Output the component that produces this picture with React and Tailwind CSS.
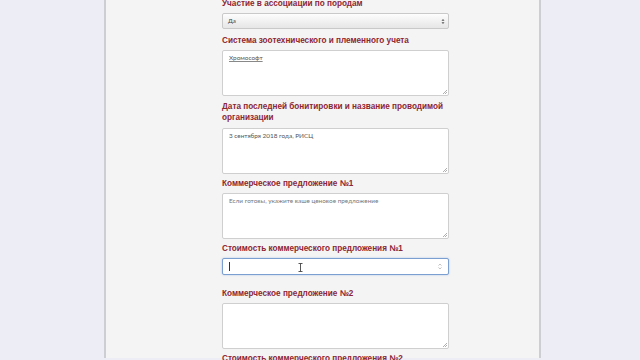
import React from 'react';

const Label = ({ children, className = '' }) => (
  <div className={`text-[8.2px] leading-[11px] font-bold text-[#8c2633] ${className}`}>
    {children}
  </div>
);

const Area = ({ text, placeholder, underline }) => (
  <div className="relative h-[46px] w-[227px] rounded-[2px] border border-[#cfcfcf] bg-white px-[6px] pt-[3px] text-[6.4px] leading-[8px]">
    {text && <span className={`text-[#555] ${underline ? 'underline decoration-[#888]' : ''}`}>{text}</span>}
    {placeholder && <span className="text-[#777]">{placeholder}</span>}
    {/* resize grip */}
    <svg className="absolute bottom-[1px] right-[1px]" width="5" height="5" viewBox="0 0 5 5">
      <path d="M1 5 L5 1 M3 5 L5 3" stroke="#9a9a9a" strokeWidth="0.8" />
    </svg>
  </div>
);

export default function App() {
  return (
    <div className="min-h-[360px] h-[360px] overflow-hidden bg-[#ecedf5]" style={{ fontFamily: '"Liberation Sans", Arial, sans-serif' }}>
      <div className="ml-[104px] h-full w-[437px] border-l-[2px] border-r-[2px] border-[#cdcdd4] bg-[#f4f4f4] pl-[116px]">
        <div className="-mt-[2px] flex flex-col">
          <Label>Участие в ассоциации по породам</Label>
          <div className="mt-[4px] flex h-[16px] w-[227px] items-center justify-between rounded-[2px] border border-[#c9c9c9] bg-gradient-to-b from-[#fdfdfd] to-[#e6e6e6] pl-[5px] pr-[3px]">
            <span className="text-[6.2px] text-[#444]" style={{ fontFamily: 'Lato, sans-serif' }}>Да</span>
            <svg width="4" height="7" viewBox="0 0 4 7">
              <path d="M0.5 2.8 L2 1 L3.5 2.8 Z M0.5 4.2 L2 6 L3.5 4.2 Z" fill="#555" />
            </svg>
          </div>

          <Label className="mt-[6px]">Система зоотехнического и племенного учета</Label>
          <div className="mt-[4px]" style={{ fontFamily: 'Lato, sans-serif' }}>
            <Area text="Хромософт" underline />
          </div>

          <Label className="mt-[5px] w-[226px]">Дата последней бонитировки и название проводимой организации</Label>
          <div className="mt-[5px]" style={{ fontFamily: 'Lato, sans-serif' }}>
            <Area text="3 сентября 2018 года, РИСЦ" />
          </div>

          <Label className="mt-[4px]">Коммерческое предложение №1</Label>
          <div className="mt-[4px]" style={{ fontFamily: 'Lato, sans-serif' }}>
            <Area placeholder="Если готовы, укажите ваше ценовое предложение" />
          </div>

          <Label className="mt-[4px]">Стоимость коммерческого предложения №1</Label>
          <div className="relative mt-[4px] flex h-[17px] w-[227px] items-center justify-between rounded-[2px] border border-[#7b9fd0] bg-white pl-[6px] pr-[6px] shadow-[0_0_2px_rgba(100,150,220,0.5)]">
            <div className="h-[9px] w-[1px] bg-[#333]" />
            <svg className="absolute left-[75px] top-[4px]" width="5" height="9" viewBox="0 0 5 9">
              <path d="M0.5 0.5 H4.5 M2.5 0.5 V8.5 M0.5 8.5 H4.5" stroke="#444" strokeWidth="0.9" fill="none" />
            </svg>
            <svg width="4" height="7" viewBox="0 0 4 7">
              <path d="M0.5 2.6 L2 1 L3.5 2.6 M0.5 4.4 L2 6 L3.5 4.4" stroke="#aaa" strokeWidth="0.7" fill="none" />
            </svg>
          </div>

          <Label className="mt-[13px]">Коммерческое предложение №2</Label>
          <div className="mt-[4px]" style={{ fontFamily: 'Lato, sans-serif' }}>
            <Area />
          </div>

          <Label className="mt-[4px]">Стоимость коммерческого предложения №2</Label>
        </div>
      </div>
    </div>
  );
}
